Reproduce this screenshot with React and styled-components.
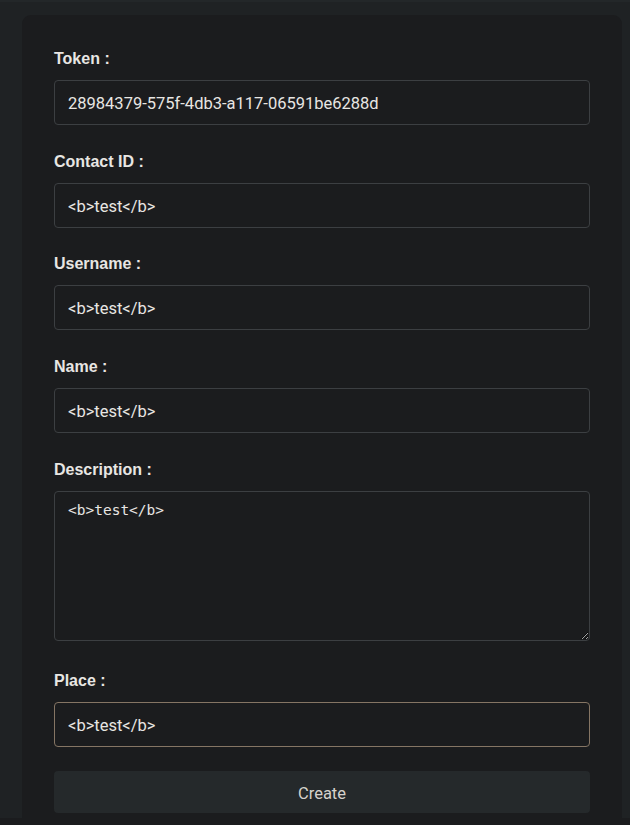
import React from "react";
import styled, { createGlobalStyle } from "styled-components";

const GlobalStyle = createGlobalStyle`
  html, body {
    margin: 0;
    padding: 0;
    background: #1b1c1e;
    overflow: hidden;
  }
`;

const Page = styled.div`
  height: 818px;
  padding: 13px 8px 0 22px;
  box-sizing: border-box;
  background: #1f2224;
  border-top: 2px solid #232729;
`;

const Card = styled.form`
  background: #1b1c1e;
  border-radius: 9px;
  padding: 35px 32px 12px;
  display: flex;
  flex-direction: column;
`;

const Field = styled.div`
  display: flex;
  flex-direction: column;
  margin-bottom: ${(p) => p.$gap || "28px"};
`;

const Label = styled.label`
  font-family: "Liberation Sans", Arial, sans-serif;
  font-weight: bold;
  font-size: 16px;
  line-height: 18px;
  color: #e8e6e3;
  margin-bottom: 12px;
`;

const Input = styled.input`
  box-sizing: border-box;
  height: 45px;
  padding: 1px 13px 0;
  background: #1b1c1e;
  border: 1px solid ${(p) => (p.$focused ? "#857564" : "#3c3f42")};
  border-radius: 4px;
  font-family: Roboto, "Open Sans", sans-serif;
  font-size: 16.5px;
  color: #e8e6e3;
  outline: none;
`;

const TextArea = styled.textarea`
  box-sizing: border-box;
  height: 150px;
  padding: 10px 13px;
  background: #1b1c1e;
  border: 1px solid #3c3f42;
  border-radius: 4px;
  font-family: "DejaVu Sans Mono", monospace;
  font-size: 14.5px;
  color: #e8e6e3;
  outline: none;
  resize: vertical;
  display: block;
`;

const Button = styled.button`
  height: 42px;
  border: none;
  border-radius: 4px;
  background: #25292b;
  color: #d6d2cc;
  font-family: Roboto, "Open Sans", sans-serif;
  font-size: 16.5px;
  padding-top: 3px;
`;

const fields = [
  { id: "token", label: "Token :", value: "28984379-575f-4db3-a117-06591be6288d", gap: "28px" },
  { id: "contact", label: "Contact ID :", value: "<b>test</b>", gap: "27px" },
  { id: "username", label: "Username :", value: "<b>test</b>", gap: "28px" },
  { id: "name", label: "Name :", value: "<b>test</b>", gap: "28px" },
];

export default function App() {
  return (
    <>
      <GlobalStyle />
      <Page>
        <Card onSubmit={(e) => e.preventDefault()}>
          {fields.map((f) => (
            <Field key={f.id} $gap={f.gap}>
              <Label htmlFor={f.id}>{f.label}</Label>
              <Input id={f.id} defaultValue={f.value} />
            </Field>
          ))}
          <Field $gap="31px">
            <Label htmlFor="description">Description :</Label>
            <TextArea id="description" defaultValue="<b>test</b>" />
          </Field>
          <Field $gap="24px">
            <Label htmlFor="place">Place :</Label>
            <Input id="place" defaultValue="<b>test</b>" $focused />
          </Field>
          <Button type="submit">Create</Button>
        </Card>
      </Page>
    </>
  );
}
